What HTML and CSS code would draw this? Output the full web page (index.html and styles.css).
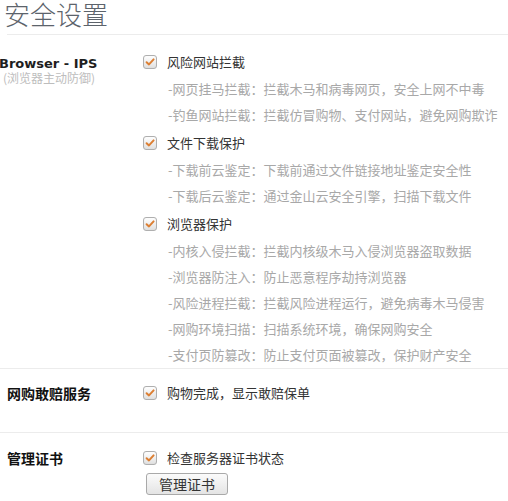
FILE: index.html
```html
<!DOCTYPE html>
<html lang="zh-CN">
<head>
<meta charset="utf-8">
<title>安全设置</title>
<link rel="stylesheet" href="styles.css">
</head>
<body>
<div class="page">
  <div class="header"><h1 class="title">安全设置</h1></div>

  <div class="section first">
    <div class="side">
      <div class="side-en">Browser - IPS</div>
      <div class="side-sub">(浏览器主动防御)</div>
    </div>
    <div class="main">
      <div class="group">
        <div class="check-row"><span class="cb"><svg viewBox="0 0 14 14" width="14" height="14"><path d="M3.6 7.2 L6 9.4 L10.6 4.4" fill="none" stroke="#dc7f33" stroke-width="2" stroke-linecap="round" stroke-linejoin="round"/></svg></span><span class="check-label">风险网站拦截</span></div>
        <div class="sub-row">-网页挂马拦截：拦截木马和病毒网页，安全上网不中毒</div>
        <div class="sub-row">-钓鱼网站拦截：拦截仿冒购物、支付网站，避免网购欺诈</div>
      </div>
      <div class="group">
        <div class="check-row"><span class="cb"><svg viewBox="0 0 14 14" width="14" height="14"><path d="M3.6 7.2 L6 9.4 L10.6 4.4" fill="none" stroke="#dc7f33" stroke-width="2" stroke-linecap="round" stroke-linejoin="round"/></svg></span><span class="check-label">文件下载保护</span></div>
        <div class="sub-row">-下载前云鉴定：下载前通过文件链接地址鉴定安全性</div>
        <div class="sub-row">-下载后云鉴定：通过金山云安全引擎，扫描下载文件</div>
      </div>
      <div class="group">
        <div class="check-row"><span class="cb"><svg viewBox="0 0 14 14" width="14" height="14"><path d="M3.6 7.2 L6 9.4 L10.6 4.4" fill="none" stroke="#dc7f33" stroke-width="2" stroke-linecap="round" stroke-linejoin="round"/></svg></span><span class="check-label">浏览器保护</span></div>
        <div class="sub-row">-内核入侵拦截：拦截内核级木马入侵浏览器盗取数据</div>
        <div class="sub-row">-浏览器防注入：防止恶意程序劫持浏览器</div>
        <div class="sub-row">-风险进程拦截：拦截风险进程运行，避免病毒木马侵害</div>
        <div class="sub-row">-网购环境扫描：扫描系统环境，确保网购安全</div>
        <div class="sub-row">-支付页防篡改：防止支付页面被篡改，保护财产安全</div>
      </div>
    </div>
  </div>

  <div class="section second">
    <div class="side"><div class="side-cn">网购敢赔服务</div></div>
    <div class="main">
      <div class="check-row"><span class="cb"><svg viewBox="0 0 14 14" width="14" height="14"><path d="M3.6 7.2 L6 9.4 L10.6 4.4" fill="none" stroke="#dc7f33" stroke-width="2" stroke-linecap="round" stroke-linejoin="round"/></svg></span><span class="check-label">购物完成，显示敢赔保单</span></div>
    </div>
  </div>

  <div class="section third">
    <div class="side"><div class="side-cn">管理证书</div></div>
    <div class="main">
      <div class="check-row"><span class="cb"><svg viewBox="0 0 14 14" width="14" height="14"><path d="M3.6 7.2 L6 9.4 L10.6 4.4" fill="none" stroke="#dc7f33" stroke-width="2" stroke-linecap="round" stroke-linejoin="round"/></svg></span><span class="check-label">检查服务器证书状态</span></div>
      <button class="btn" type="button">管理证书</button>
    </div>
  </div>
</div>
</body>
</html>
```

FILE: styles.css
```css
html, body {
  margin: 0;
  padding: 0;
  background: #ffffff;
}
body {
  font-family: "Noto Sans CJK SC", "Noto Sans", sans-serif;
  color: #333333;
  overflow: hidden;
}
.page {
  width: 508px;
}
.header {
  margin-left: 7px;
  height: 34px;
  border-bottom: 1px solid #ececec;
}
.title {
  margin: 0 0 0 -3px;
  font-size: 26px;
  line-height: 27px;
  font-weight: 300;
  color: #5c636b;
}
.section {
  display: grid;
  grid-template-columns: 143px 1fr;
}
.section.first {
  padding-top: 13px;
}
.section.second {
  border-top: 1px solid #ececec;
  padding-top: 10px;
  padding-bottom: 25px;
}
.section.third {
  border-top: 1px solid #ececec;
  padding-top: 11px;
}
.side-en {
  font-family: "DejaVu Sans", sans-serif;
  font-weight: bold;
  font-size: 13px;
  line-height: 14px;
  margin-top: 9px;
  margin-left: -1px;
  color: #1e1e1e;
  white-space: nowrap;
}
.side-sub {
  font-size: 12px;
  line-height: 14px;
  color: #bdbdbd;
  margin-left: 3px;
  white-space: nowrap;
}
.side-cn {
  font-size: 14px;
  font-weight: bold;
  line-height: 28px;
  margin-left: 7px;
  color: #111111;
}
.group + .group {
  margin-top: 1px;
}
.check-row {
  display: flex;
  align-items: center;
  height: 28px;
}
.cb {
  display: block;
  box-sizing: border-box;
  width: 14px;
  height: 14px;
  border: 1px solid #afafaf;
  border-radius: 3px;
  background: linear-gradient(#ffffff, #e0e0e0);
  box-shadow: inset 0 0 1px rgba(0,0,0,0.08);
  position: relative;
}
.cb svg {
  position: absolute;
  left: -1px;
  top: -1px;
}
.check-label {
  margin-left: 10px;
  font-size: 13px;
  line-height: 28px;
  color: #333333;
}
.sub-row {
  padding-left: 25px;
  font-size: 13px;
  line-height: 26px;
  height: 26px;
  color: #a8a8a8;
  white-space: nowrap;
}
.btn {
  display: block;
  margin: 1px 0 6px 3px;
  width: 82px;
  height: 22px;
  padding: 0;
  font-family: "Noto Sans CJK SC", sans-serif;
  font-size: 14px;
  line-height: 20px;
  color: #333333;
  border: 1px solid #a9a9a9;
  border-radius: 3px;
  background: linear-gradient(#fbfbfb, #e4e4e4);
}
```
